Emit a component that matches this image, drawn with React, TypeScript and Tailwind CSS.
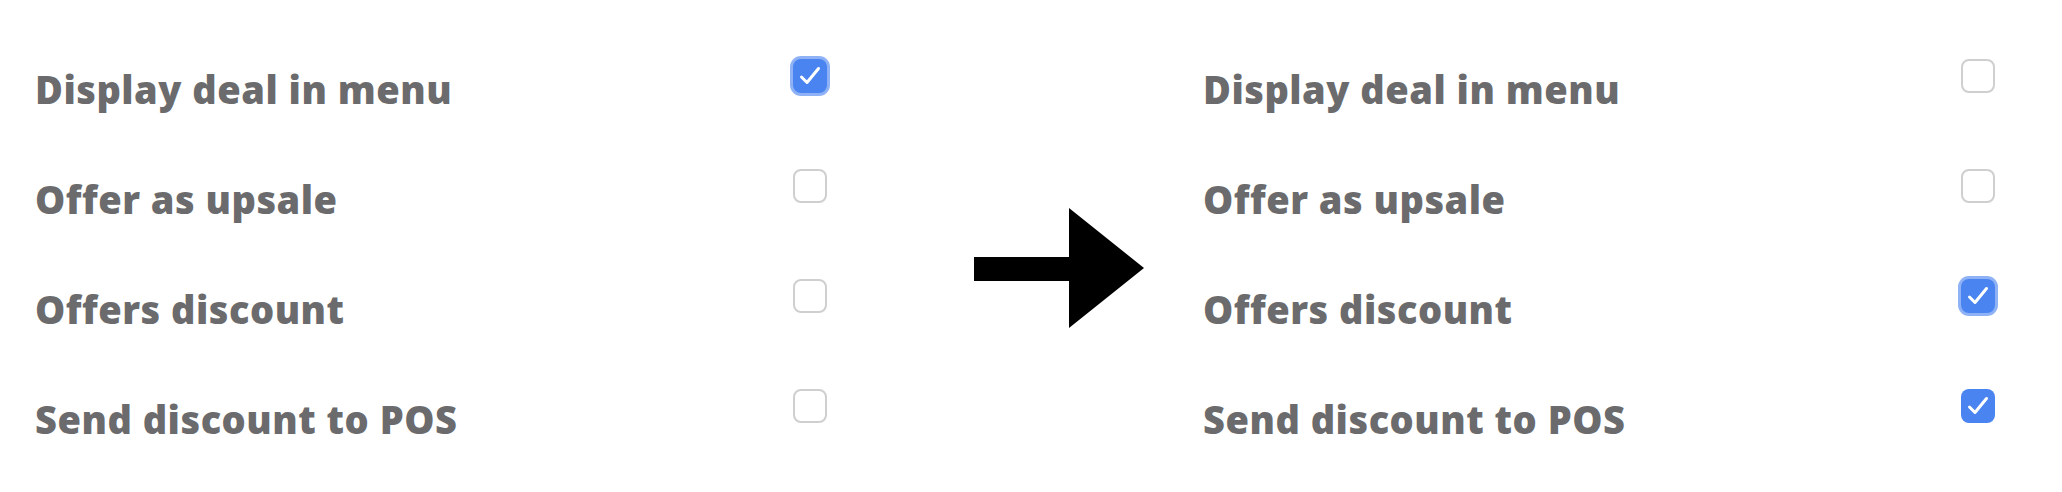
import React from 'react';

type Row = { label: string; checked: boolean; focused?: boolean };

const before: Row[] = [
  { label: 'Display deal in menu', checked: true, focused: true },
  { label: 'Offer as upsale', checked: false },
  { label: 'Offers discount', checked: false },
  { label: 'Send discount to POS', checked: false },
];

const after: Row[] = [
  { label: 'Display deal in menu', checked: false },
  { label: 'Offer as upsale', checked: false },
  { label: 'Offers discount', checked: true, focused: true },
  { label: 'Send discount to POS', checked: true },
];

const Checkbox: React.FC<{ checked: boolean; focused?: boolean }> = ({ checked, focused }) => {
  if (!checked) {
    return <div className="w-[34px] h-[34px] rounded-[8px] border-2 border-[#cfcfcf] bg-white shrink-0" />;
  }
  return (
    <div
      className={
        'w-[34px] h-[34px] rounded-[8px] bg-[#4a84f0] shrink-0 flex items-center justify-center ' +
        (focused ? 'ring-[3px] ring-[#8fb2f6]' : '')
      }
    >
      <svg width="26" height="26" viewBox="0 0 26 26" fill="none">
        <path d="M4.5 14 L10 19.5 L21.5 5.5" stroke="white" strokeWidth="3" strokeLinecap="round" strokeLinejoin="round" />
      </svg>
    </div>
  );
};

const Panel: React.FC<{ rows: Row[] }> = ({ rows }) => (
  <div className="flex flex-col w-[792px] shrink-0">
    {rows.map((row) => (
      <div key={row.label} className="flex items-start h-[110px]">
        <div className="w-[758px] mt-[3px] text-[38px] leading-[54px] font-extrabold tracking-[0.5px] text-[#6b6b6d] font-['Open_Sans',sans-serif]">
          {row.label}
        </div>
        <Checkbox checked={row.checked} focused={row.focused} />
      </div>
    ))}
  </div>
);

export default function App() {
  return (
    <div className="w-[2062px] h-[492px] bg-white flex items-start pt-[59px]">
      <div className="ml-[35px]">
        <Panel rows={before} />
      </div>
      <svg className="ml-[147px] mt-[149px] shrink-0" width="170" height="120" viewBox="0 0 170 120">
        <rect x="0" y="49" width="96" height="24" fill="black" />
        <polygon points="95,0 170,60 95,120" fill="black" />
      </svg>
      <div className="ml-[59px]">
        <Panel rows={after} />
      </div>
    </div>
  );
}
